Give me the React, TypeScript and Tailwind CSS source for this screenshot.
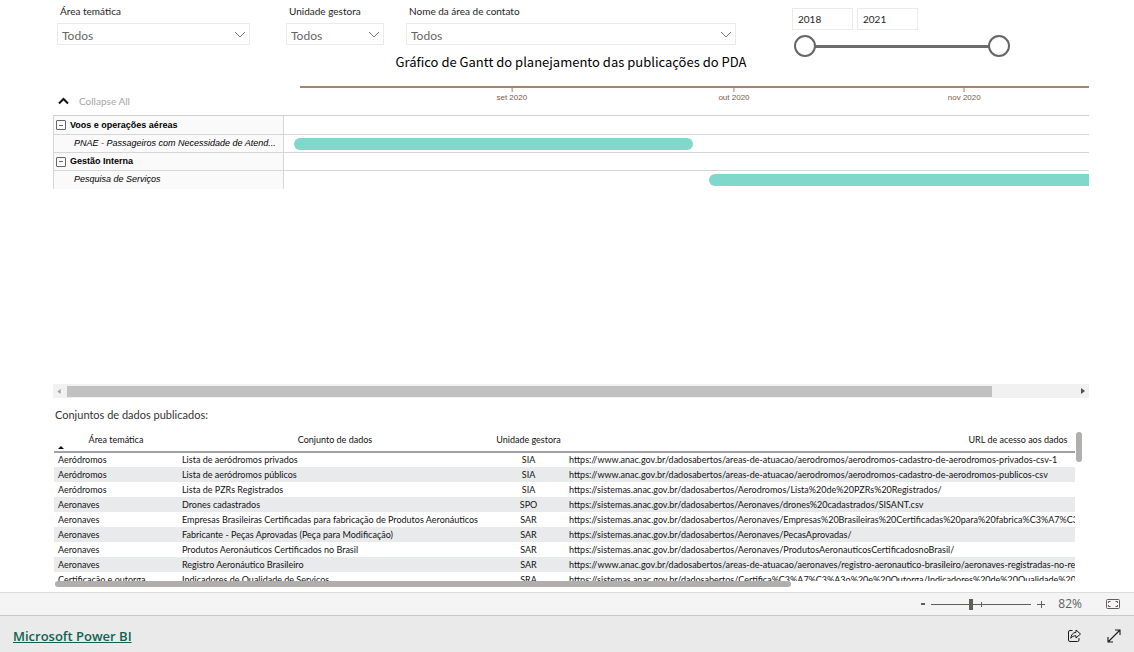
import React, { useState } from "react";

const filters = [
  { id: "area", label: "Área temática" },
  { id: "unidade", label: "Unidade gestora" },
  { id: "contato", label: "Nome da área de contato" },
];

// positions are percentages of the visible timeline
const months = [
  { name: "set 2020", at: 28.3 },
  { name: "out 2020", at: 55.9 },
  { name: "nov 2020", at: 84.5 },
];

const groups = [
  {
    name: "Voos e operações aéreas",
    task: "PNAE - Passageiros com Necessidade de Atend...",
    start: 1.3,
    end: 50.8,
  },
  { name: "Gestão Interna", task: "Pesquisa de Serviços", start: 52.8, end: 104 },
];

const datasets = [
  ["Aeródromos", "Lista de aeródromos privados", "SIA", "https://www.anac.gov.br/dadosabertos/areas-de-atuacao/aerodromos/aerodromos-cadastro-de-aerodromos-privados-csv-1"],
  ["Aeródromos", "Lista de aeródromos públicos", "SIA", "https://www.anac.gov.br/dadosabertos/areas-de-atuacao/aerodromos/aerodromos-cadastro-de-aerodromos-publicos-csv"],
  ["Aeródromos", "Lista de PZRs Registrados", "SIA", "https://sistemas.anac.gov.br/dadosabertos/Aerodromos/Lista%20de%20PZRs%20Registrados/"],
  ["Aeronaves", "Drones cadastrados", "SPO", "https://sistemas.anac.gov.br/dadosabertos/Aeronaves/drones%20cadastrados/SISANT.csv"],
  ["Aeronaves", "Empresas Brasileiras Certificadas para fabricação de Produtos Aeronáuticos", "SAR", "https://sistemas.anac.gov.br/dadosabertos/Aeronaves/Empresas%20Brasileiras%20Certificadas%20para%20fabrica%C3%A7%C3%A3o"],
  ["Aeronaves", "Fabricante - Peças Aprovadas (Peça para Modificação)", "SAR", "https://sistemas.anac.gov.br/dadosabertos/Aeronaves/PecasAprovadas/"],
  ["Aeronaves", "Produtos Aeronáuticos Certificados no Brasil", "SAR", "https://sistemas.anac.gov.br/dadosabertos/Aeronaves/ProdutosAeronauticosCertificadosnoBrasil/"],
  ["Aeronaves", "Registro Aeronáutico Brasileiro", "SAR", "https://www.anac.gov.br/dadosabertos/areas-de-atuacao/aeronaves/registro-aeronautico-brasileiro/aeronaves-registradas-no-registro"],
  ["Certificação e outorga", "Indicadores de Qualidade de Serviços", "SRA", "https://sistemas.anac.gov.br/dadosabertos/Certifica%C3%A7%C3%A3o%20e%20Outorga/Indicadores%20de%20Qualidade%20de%20Servicos"],
];

const Filter = ({ id, label }: { id: string; label: string }) => (
  <div className="flex flex-col">
    <label htmlFor={id} className="h-4 px-[3px] text-[10px] leading-[14px] whitespace-nowrap text-[#252423]">
      {label}
    </label>
    <div className="relative mt-[3px]">
      <select
        id={id}
        className="block h-[22px] w-full appearance-none border border-[#eaeaea] bg-white px-1 pt-[3px] text-[12px] leading-4 text-[#666]"
      >
        <option>Todos</option>
      </select>
      <svg className="pointer-events-none absolute top-2 right-1 h-2 w-3" viewBox="0 0 12 8" fill="none" stroke="#777">
        <path d="M1 1l5 5 5-5" />
      </svg>
    </div>
  </div>
);

const YearRange = () => {
  const [from, setFrom] = useState("2018");
  const [to, setTo] = useState("2021");
  const thumb =
    "pointer-events-none absolute inset-0 h-[22px] w-full appearance-none bg-transparent [&::-webkit-slider-thumb]:pointer-events-auto [&::-webkit-slider-thumb]:size-[22px] [&::-webkit-slider-thumb]:appearance-none [&::-webkit-slider-thumb]:rounded-full [&::-webkit-slider-thumb]:border-2 [&::-webkit-slider-thumb]:border-[#666] [&::-webkit-slider-thumb]:bg-white";
  const box = "h-[22px] w-[61px] border border-[#eaeaea] bg-white px-[5px] text-[10px] text-[#252423]";

  return (
    <div className="pt-1">
      <div className="flex gap-1">
        <input aria-label="Ano inicial" className={box} value={from} onChange={(e) => setFrom(e.target.value)} />
        <input aria-label="Ano final" className={box} value={to} onChange={(e) => setTo(e.target.value)} />
      </div>
      <div className="relative mt-[5px] ml-0.5 flex h-[22px] items-center px-3">
        <div className="h-[3px] w-full bg-[#6b6b6b]" />
        <input type="range" aria-label="De" min="2018" max="2021" value={from} onChange={(e) => setFrom(e.target.value)} className={thumb} />
        <input type="range" aria-label="Até" min="2018" max="2021" value={to} onChange={(e) => setTo(e.target.value)} className={thumb} />
      </div>
    </div>
  );
};

const Gantt = () => (
  <section className="-mt-1">
    <h2 className="text-center text-[13px] leading-[18px] font-['Noto_Sans_CJK_JP',sans-serif] text-black">Gráfico de Gantt do planejamento das publicações do PDA</h2>
    <div className="mt-3.5 flex h-[30px]">
      <div className="flex w-[231px] shrink-0 items-end pb-1.5">
        <button className="flex items-center gap-[10px] pl-[5px] text-[10px] leading-4 text-[#a6a6a6]">
          <svg className="h-2 w-[11px]" viewBox="0 0 11 8" fill="none" stroke="#111" strokeWidth="2">
            <path d="M1 6.500L5.500 2 10 6.500" />
          </svg>
          Collapse All
        </button>
      </div>
      <div className="relative flex-1 pl-4">
        <div className="mt-px h-0.5 bg-[#a5836c]" />
        {months.map((m) => (
          <div
            key={m.name}
            className="absolute top-0.5 flex -translate-x-1/2 flex-col items-center font-['Liberation_Sans',sans-serif] text-[8px] leading-3 whitespace-nowrap text-[#7a5a48]"
            style={{ left: `${m.at}%` }}
          >
            <span className="h-[5px] w-px bg-[#a5836c]" />
            {m.name}
          </div>
        ))}
      </div>
    </div>
    <div className="h-[269px] border-t border-[#d0d0d0] font-['Liberation_Sans',sans-serif] text-[9px] leading-[17px] text-black">
      {groups.map((g, i) => (
        <div key={g.name}>
          <div className={`flex border-b border-[#d6d6d6] ${i === 0 ? "h-[19px]" : "h-[18px]"}`}>
            <div className="flex w-[231px] shrink-0 items-center gap-1 border-x border-[#d6d6d6] bg-[#fafafa] pl-0.5 font-bold">
              <button aria-label={`Recolher ${g.name}`} className="flex size-[10px] items-center justify-center rounded-[1px] border border-[#666]">
                <span className="h-px w-1 bg-[#666]" />
              </button>
              {g.name}
            </div>
          </div>
          <div className={`flex h-[18px] ${i === 0 ? "border-b border-[#d6d6d6]" : ""}`}>
            <div className="w-[231px] shrink-0 border-x border-[#d6d6d6] bg-[#fafafa] pl-5 whitespace-nowrap italic">{g.task}</div>
            <div className="relative flex-1 overflow-hidden">
              <div
                className="absolute top-[3px] h-3 rounded-full bg-[#80d8cb]"
                style={{ left: `${g.start}%`, width: `${g.end - g.start}%` }}
              />
            </div>
          </div>
        </div>
      ))}
    </div>
    <div className="flex h-[14px] items-center justify-between bg-[#f1f1f1] px-1">
      <svg className="h-[5px] w-1" viewBox="0 0 4 6" fill="#a3a3a3">
        <path d="M4 0v6L0 3z" />
      </svg>
      <div className="mr-auto ml-1.5 h-[11px] w-[90%] bg-[#c1c1c1]" />
      <svg className="h-[6px] w-1" viewBox="0 0 4 6" fill="#505050">
        <path d="M0 0v6l4-3z" />
      </svg>
    </div>
  </section>
);

const Datasets = () => (
  <section className="mt-2">
    <h2 className="pl-0.5 text-[11px] leading-[18px] text-[#333]">Conjuntos de dados publicados:</h2>
    <div className="mt-2 mr-[7px] flex">
      <div className="ml-px h-[149px] flex-1 overflow-hidden">
        <table className="w-[1417px] table-fixed text-left text-[9px] leading-[14px] whitespace-nowrap text-[#111]">
          <colgroup>
            <col className="w-[124px]" />
            <col className="w-[314px]" />
            <col className="w-[73px]" />
            <col />
          </colgroup>
          <thead>
            <tr className="h-5 border-b-2 border-[#a0a0aa] text-center">
              <th className="relative pb-1 font-normal">
                Área temática
                <svg className="absolute bottom-0.5 left-1 h-[3px] w-1.5" viewBox="0 0 6 3" fill="#111">
                  <path d="M3 0l3 3H0z" />
                </svg>
              </th>
              <th className="pb-1 font-normal">Conjunto de dados</th>
              <th className="pb-1 font-normal">Unidade gestora</th>
              <th className="pb-1 font-normal">URL de acesso aos dados</th>
            </tr>
          </thead>
          <tbody>
            {datasets.map(([area, name, unit, url]) => (
              <tr key={name} className="h-[15px] even:bg-[#e9eaec]">
                <td className="pl-1">{area}</td>
                <td className="pl-1">{name}</td>
                <td className="text-center">{unit}</td>
                <td className="pl-1">{url}</td>
              </tr>
            ))}
          </tbody>
        </table>
      </div>
      <div className="ml-px h-[30px] w-1.5 rounded-full bg-[#b0afad]" />
    </div>
    <div className="ml-0.5 h-1.5 w-[71%] rounded-full bg-[#b0afad]" />
  </section>
);

const StatusBar = () => (
  <div className="flex h-[23px] items-center justify-end border-t border-[#dcdcdc] bg-[#f4f4f4] pr-[14px] font-['Open_Sans',sans-serif] text-[#605e5c]">
    <button aria-label="Reduzir" className="h-0.5 w-1 bg-[#605e5c]" />
    <div className="relative ml-1.5 flex h-3 w-[100px] items-center">
      <div className="h-px w-full bg-[#605e5c]" />
      <div className="absolute left-1/2 h-[5px] w-px bg-[#605e5c]" />
      <input
        type="range"
        aria-label="Zoom"
        min="0"
        max="100"
        defaultValue="39"
        className="absolute inset-0 w-full appearance-none bg-transparent [&::-webkit-slider-thumb]:h-[11px] [&::-webkit-slider-thumb]:w-1 [&::-webkit-slider-thumb]:appearance-none [&::-webkit-slider-thumb]:bg-[#605e5c]"
      />
    </div>
    <button aria-label="Ampliar" className="ml-1.5">
      <svg className="size-2" viewBox="0 0 8 8" stroke="currentColor">
        <path d="M0 4.500h8M4.500 1v7" />
      </svg>
    </button>
    <span className="ml-[13px] text-[12px] leading-4">82%</span>
    <button aria-label="Ajustar à página" className="ml-6">
      <svg className="h-3 w-[14px]" viewBox="0 0 14 12" fill="none" stroke="currentColor">
        <rect x="0.500" y="1.500" width="13" height="9" rx="1" />
        <path d="M2.500 5V3.500H4.500M9.500 3.500h2V5M11.500 7v1.500h-2M4.500 8.500h-2V7" />
      </svg>
    </button>
  </div>
);

const Footer = () => (
  <footer className="flex h-[37px] items-center border-t border-[#c8c8c8] bg-[#eaeaea] px-[13px] font-['Open_Sans',sans-serif]">
    <a href="#" className="mt-1 text-[13px] leading-5 font-semibold text-[#0f6252] underline">
      Microsoft Power BI
    </a>
    <button aria-label="Compartilhar" className="mt-1 ml-auto">
      <svg className="size-[14px]" viewBox="0 0 14 14" fill="none" stroke="#1b1a19" strokeLinejoin="round">
        <path d="M5.500 1.500H3A1.500 1.500 0 001.500 3v8A1.500 1.500 0 003 12.500h7.500A1.500 1.500 0 0012 11V9" />
        <path d="M9 1l4.500 4L9 9V6.800C6.500 6.700 5 7.600 3.800 9.300 4 6 5.800 3.600 9 3.300z" />
      </svg>
    </button>
    <button aria-label="Tela cheia" className="mt-1 ml-[26px]">
      <svg className="size-[14px]" viewBox="0 0 14 14" fill="none" stroke="#1b1a19" strokeWidth="1.100">
        <path d="M1 13L13 1M8 1h5v5M1 8v5h5" />
      </svg>
    </button>
  </footer>
);

const App = () => {
  return (
    <div className="flex min-h-screen flex-col bg-white font-[Lato,'Noto_Sans',sans-serif]">
      <main className="flex-1 pt-1 pr-[45px] pl-[53px]">
        <div className="grid grid-cols-[193fr_134fr_352fr_274fr] pr-[79px] pl-1">
          <Filter {...filters[0]} />
          <div className="pl-9">
            <Filter {...filters[1]} />
          </div>
          <div className="pl-[22px]">
            <Filter {...filters[2]} />
          </div>
          <div className="pl-14">
            <YearRange />
          </div>
        </div>
        <Gantt />
        <Datasets />
      </main>
      <StatusBar />
      <Footer />
    </div>
  );
};

export default App;
